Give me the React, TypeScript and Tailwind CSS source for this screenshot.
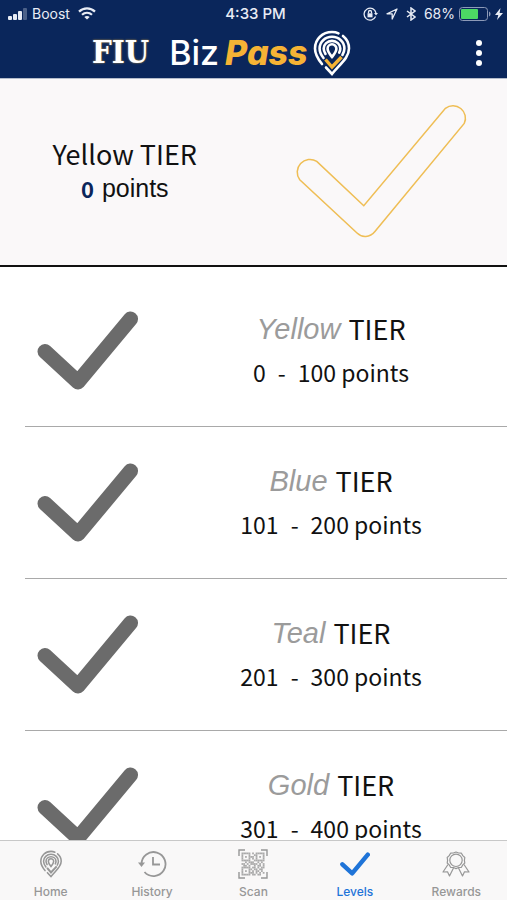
import type { ReactNode } from "react";

interface Tier {
  name: string;
  from: number;
  to: number;
}

interface Tab {
  label: string;
  icon: ReactNode;
  active?: boolean;
}

const TIERS: Tier[] = [
  { name: "Yellow", from: 0, to: 100 },
  { name: "Blue", from: 101, to: 200 },
  { name: "Teal", from: 201, to: 300 },
  { name: "Gold", from: 301, to: 400 },
];

const TABS: Tab[] = [
  { label: "Home", icon: <PinIcon className="h-7 w-6" accent="currentColor" /> },
  { label: "History", icon: <HistoryIcon /> },
  { label: "Scan", icon: <ScanIcon /> },
  {
    label: "Levels",
    icon: <CheckIcon className="h-6 w-[30px]" />,
    active: true,
  },
  { label: "Rewards", icon: <RewardIcon /> },
];

export default function App() {
  return (
    <div className="flex h-screen flex-col bg-white text-[#111111]">
      <header className="border-b border-[#b4bccb] bg-[#0a265b] text-white">
        <StatusBar />
        <TitleBar />
      </header>
      <main className="min-h-0 flex-1 overflow-y-auto [scrollbar-width:none]">
        <CurrentTier name="Yellow" points={0} />
        <ul className="pt-2 pl-[25px]">
          {TIERS.map((tier) => (
            <TierRow key={tier.name} tier={tier} />
          ))}
        </ul>
      </main>
      <TabBar />
    </div>
  );
}

function StatusBar() {
  return (
    <div className="grid h-[27px] grid-cols-[1fr_auto_1fr] items-center pr-1 pl-2 font-['Inter',sans-serif] text-sm text-[#e8ecf5]">
      <div className="flex items-center gap-1">
        <svg className="h-3 w-5" viewBox="0 0 20 12" fill="currentColor">
          <rect x="0" y="8" width="4" height="4" rx="1" />
          <rect x="5" y="6" width="4" height="6" rx="1" />
          <rect x="10" y="3" width="4" height="9" rx="1" />
          <rect x="15" y="0" width="4" height="12" rx="1" opacity="0.3" />
        </svg>
        <span>Boost</span>
        <svg className="ml-1 h-[13px] w-[18px]" viewBox="0 0 18 13" fill="none" stroke="currentColor" strokeWidth="2.2">
          <path d="M1 4.6C5.5.2 12.5.2 17 4.6" />
          <path d="M4 7.8c2.900-2.700 7.100-2.700 10 0" />
          <path d="M9 12.600 6.300 9.900c1.500-1.300 3.900-1.300 5.400 0z" fill="currentColor" stroke="none" />
        </svg>
      </div>
      <span className="text-[15px] font-medium">4:33 PM</span>
      <div className="flex items-center justify-end gap-2">
        <svg className="h-[14px] w-[15px]" viewBox="0 0 15 14" fill="none" stroke="currentColor" strokeWidth="1.300">
          <path d="M12.600 9.600A6 6 0 1 1 13 6" />
          <path d="M11 6h4l-2 2.500z" fill="currentColor" stroke="none" />
          <rect x="4.500" y="6.300" width="5" height="4" fill="currentColor" stroke="none" />
          <path d="M5.500 6.500V5a1.500 1.500 0 0 1 3 0v1.500" />
        </svg>
        <svg className="h-3 w-3" viewBox="0 0 12 12" fill="none" stroke="currentColor" strokeWidth="1.300" strokeLinejoin="round">
          <path d="M11 1 1 5.800h5.200V11z" />
        </svg>
        <svg className="h-[14px] w-[10px]" viewBox="0 0 10 14" fill="none" stroke="currentColor" strokeWidth="1.500">
          <path d="M1 4l8 6-4 3V1l4 3-8 6" />
        </svg>
        <span>68%</span>
        <svg className="-ml-1 h-[14px] w-8" viewBox="0 0 32 14">
          <rect x="0.500" y="0.500" width="28" height="13" rx="3" fill="none" stroke="#8d9ab8" />
          <rect x="2" y="2" width="17" height="10" rx="1" fill="#4cd964" />
          <path d="M30 4.500c2 .8 2 4.200 0 5z" fill="#8d9ab8" />
        </svg>
        <svg className="-ml-1 h-3 w-2" viewBox="0 0 8 12" fill="currentColor">
          <path d="M5.500 0 0 7h3.300L2 12l6-7H4.600z" />
        </svg>
      </div>
    </div>
  );
}

function TitleBar() {
  return (
    <div className="flex h-[51px] items-center justify-between pr-[18px] pl-[92px]">
      <h1 className="flex items-center leading-none">
        <span className="font-['DejaVu_Serif_Condensed','DejaVu_Serif',serif] text-[31px] font-bold [text-shadow:0_0_2px_#c99a3b]">
          FIU
        </span>
        <span className="ml-5 font-['Inter',sans-serif] text-[34px] font-medium">Biz</span>
        <span className="ml-[6px] font-['Inter',sans-serif] text-[34px] font-extrabold text-[#f5b335] italic">
          Pass
        </span>
        <PinIcon className="ml-1 h-[46px] w-10" accent="#f5b335" />
      </h1>
      <button type="button" aria-label="Menu" className="flex w-5 flex-col items-center gap-1">
        <span className="size-[6px] rounded-full bg-white" />
        <span className="size-[6px] rounded-full bg-white" />
        <span className="size-[6px] rounded-full bg-white" />
      </button>
    </div>
  );
}

function CurrentTier({ name, points }: { name: string; points: number }) {
  return (
    <section className="grid h-[188px] grid-cols-2 items-center border-b-2 border-[#111111] bg-[#faf8f9]">
      <div className="pr-1 text-center">
        <h2 className="font-['Noto_Sans_CJK_SC',sans-serif] text-[27px] leading-8">
          {name} TIER
        </h2>
        <p className="flex items-center justify-center gap-2 leading-9">
          <span className="font-['Noto_Sans_CJK_SC',sans-serif] text-[22px] font-bold text-[#0a265b]">
            {points}
          </span>
          <span className="font-['Liberation_Sans',sans-serif] text-[25px]">points</span>
        </p>
      </div>
      <div className="flex justify-center pb-1 pl-1">
        <svg
          className="h-[136px] w-[174px]"
          viewBox="0 0 172 134"
          fill="none"
          stroke="#efbe55"
          strokeWidth="1.500"
        >
          <path d="M68 102.300 21.500 58.500A12.600 12.600 0 0 0 4.700 76.700L61.300 129.300C66 134 74 134 79 127.700L167.300 21A12.300 12.300 0 0 0 148.700 6Z" />
        </svg>
      </div>
    </section>
  );
}

function TierRow({ tier }: { tier: Tier }) {
  return (
    <li className="flex h-[152px] items-center border-b border-[#a9a9a9]">
      <div className="w-[27%] pl-3 text-[#6b6b6b]">
        <CheckIcon className="h-[79px] w-[101px]" />
      </div>
      <div className="flex-1 pt-[2px] text-center">
        <h3 className="flex items-center justify-center gap-2 leading-10">
          <span className="font-['Liberation_Sans',sans-serif] text-[29px] text-[#9b9b9b] italic">
            {tier.name}
          </span>
          <span className="font-['Noto_Sans_CJK_SC',sans-serif] text-[27px]">TIER</span>
        </h3>
        <p className="flex justify-center gap-3 font-['Noto_Sans_CJK_SC',sans-serif] text-[23px] leading-[46px]">
          <span>{tier.from}</span>
          <span>-</span>
          <span>{tier.to} points</span>
        </p>
      </div>
    </li>
  );
}

function TabBar() {
  return (
    <nav className="grid h-[60px] shrink-0 grid-cols-5 border-t border-[#c8c8c8] bg-[#f9f8f8]">
      {TABS.map((tab) => (
        <button
          key={tab.label}
          type="button"
          aria-current={tab.active ? "page" : undefined}
          className={`flex flex-col items-center pt-2 font-['Inter',sans-serif] text-xs font-medium ${
            tab.active ? "text-[#1f74d8]" : "text-[#979797]"
          }`}
        >
          <span className="flex h-[30px] items-center">{tab.icon}</span>
          <span className="mt-[5px]">{tab.label}</span>
        </button>
      ))}
    </nav>
  );
}

function CheckIcon({ className }: { className: string }) {
  return (
    <svg
      className={className}
      viewBox="0 0 101 79"
      fill="none"
      stroke="currentColor"
      strokeWidth="15"
      strokeLinecap="round"
      strokeLinejoin="round"
    >
      <path d="M8 40.500 41 71 93.500 8" />
    </svg>
  );
}

// Location pin made of nested fingerprint-like rings
function PinIcon({ className, accent }: { className: string; accent: string }) {
  return (
    <svg
      className={className}
      viewBox="0 0 40 46"
      fill="none"
      stroke="currentColor"
      strokeWidth="2.600"
      strokeLinecap="round"
    >
      <path d="M10 34C5 28 3 24 3 18.500 3 9 10.500 2 20 2c2.500 0 4.600.4 6.500 1.300" />
      <path d="M31 6c3.800 3 6 7.500 6 12.500C37 28 28 34 20 44l-6-6.500" />
      <path d="M11.500 28C8.700 24.500 7.600 22 7.600 18.500 7.600 12 13 6.800 20 6.800S32.400 12 32.400 18.500c0 2.500-.8 4.500-2 6.500" />
      <path d="M13.500 24c-1.200-2-1.800-3.600-1.800-5.500 0-4.300 3.700-7.600 8.300-7.600s8.300 3.300 8.300 7.600c0 1.500-.4 2.800-1.100 4.200" />
      <path d="M20 27c-2.500-3.200-4.400-5.500-4.400-8.300a4.400 4.400 0 0 1 8.800 0c0 2.800-1.900 5.100-4.400 8.300z" />
      <path d="m13.500 29.500 6.500 7.500L29.500 27" stroke={accent} strokeWidth="3.400" strokeLinecap="butt" />
    </svg>
  );
}

function HistoryIcon() {
  return (
    <svg className="h-7 w-[30px]" viewBox="0 0 30 28" fill="none" stroke="currentColor" strokeWidth="1.800">
      <path d="M4.500 14A12 12 0 1 1 7.500 22" />
      <path d="M1 12.500h7L4.500 17z" fill="currentColor" stroke="none" />
      <path d="M16 7v7.500h7" />
    </svg>
  );
}

const QR_BITS = [
  "1111101011111",
  "1000100110001",
  "1010111010101",
  "1000101010001",
  "1111100111111",
  "0010111001010",
  "1101011110101",
  "0110100101101",
  "1111101101011",
  "1000110110110",
  "1010101011010",
  "1000111010101",
  "1111101101100",
];

function ScanIcon() {
  return (
    <svg className="size-[30px]" viewBox="0 0 30 30" fill="none" stroke="currentColor" strokeWidth="1.400">
      <path d="M1 7V1h6M23 1h6v6M29 23v6h-6M7 29H1v-6" />
      <g transform="translate(3.500 3.500) scale(1.770)" fill="currentColor" stroke="none" opacity="0.8">
        {QR_BITS.map((row, y) =>
          [...row].map((bit, x) =>
            bit === "1" ? <rect key={`${x}-${y}`} x={x} y={y} width="1" height="1" /> : null,
          ),
        )}
      </g>
    </svg>
  );
}

function RewardIcon() {
  return (
    <svg className="h-[26px] w-7" viewBox="0 0 28 26" fill="none" stroke="currentColor" strokeWidth="1.200" strokeLinejoin="round">
      <path d="M14 1l2.600 1 2.800.2 1.400 2.400L22.800 6.500l-.4 2.800.4 2.700-2 1.900-1.400 2.400-2.800.2L14 17.600l-2.600-1.100-2.800-.2-1.400-2.400-2-1.900.4-2.700-.4-2.800 2-1.900L8.600 2.200l2.800-.2z" />
      <circle cx="14" cy="9.300" r="6.200" />
      <path d="M6 13.500 1 21l4.500-.2L7.500 25l4-8" />
      <path d="m22 13.500 5 7.500-4.500-.2-2 4.200-4-8" />
    </svg>
  );
}
